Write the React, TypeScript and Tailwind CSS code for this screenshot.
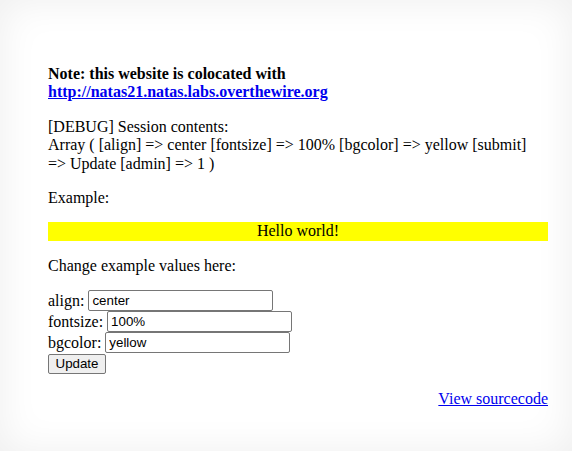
const serif = { fontFamily: '"Liberation Serif", "Times New Roman", serif' };

const inputCls =
  "h-[21px] w-[185px] border border-[#767676] rounded-[2px] bg-white px-[3px] text-[13.33px] text-black outline-none align-middle [font-family:'Liberation_Sans',Arial,sans-serif]";

const App = () => {
  return (
    <main
      style={serif}
      className="min-h-[451px] w-full bg-white text-[16px] leading-[18.4px] text-black shadow-[inset_0_0_40px_rgba(0,0,0,0.07)] overflow-hidden"
    >
      <div className="w-[500px] ml-[48px] pt-[65px] pb-[44px]">
        <p className="font-bold">
          Note: this website is colocated with{" "}
          <a href="#" className="text-[#0000ee] underline">
            http://natas21.natas.labs.overthewire.org
          </a>
        </p>

        <p className="mt-4">
          [DEBUG] Session contents:
          <br />
          Array ( [align] =&gt; center [fontsize] =&gt; 100% [bgcolor] =&gt; yellow [submit] =&gt; Update [admin] =&gt; 1 )
        </p>

        <p className="mt-4">Example:</p>

        <div className="mt-[15px] bg-[#ffff00] text-center">Hello world!</div>

        <p className="mt-4">Change example values here:</p>

        <form className="mt-[15px]" onSubmit={(e) => e.preventDefault()}>
          <div className="flex items-center h-[21px] gap-[4px]">
            <span>align:</span>
            <input className={inputCls} defaultValue="center" />
          </div>
          <div className="flex items-center h-[21px] gap-[4px]">
            <span>fontsize:</span>
            <input className={inputCls} defaultValue="100%" />
          </div>
          <div className="flex items-center h-[21px] gap-[4px]">
            <span>bgcolor:</span>
            <input className={inputCls} defaultValue="yellow" />
          </div>
          <div className="flex items-center h-[21px]">
            <button
              type="submit"
              className="h-[20px] w-[58px] border border-[#767676] rounded-[2px] bg-[#efefef] text-[13.33px] text-black [font-family:'Liberation_Sans',Arial,sans-serif]"
            >
              Update
            </button>
          </div>
        </form>

        <div className="mt-4 text-right">
          <a href="#" className="text-[#0000ee] underline">
            View sourcecode
          </a>
        </div>
      </div>
    </main>
  );
};

export default App;
